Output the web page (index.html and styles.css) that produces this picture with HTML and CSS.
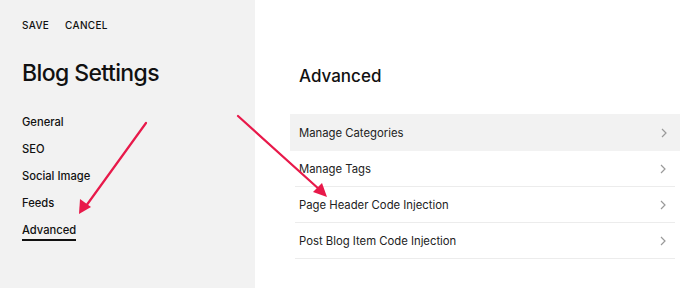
FILE: index.html
```html
<!DOCTYPE html>
<html>
<head>
<meta charset="utf-8">
<link rel="stylesheet" href="styles.css">
</head>
<body>
<div class="app">
  <aside class="sidebar">
    <div class="actions">
      <span class="action">SAVE</span>
      <span class="action">CANCEL</span>
    </div>
    <h1 class="side-title">Blog Settings</h1>
    <nav class="nav">
      <a class="nav-item">General</a>
      <a class="nav-item">SEO</a>
      <a class="nav-item">Social Image</a>
      <a class="nav-item">Feeds</a>
      <a class="nav-item active">Advanced</a>
    </nav>
  </aside>
  <main class="content">
    <h2 class="content-title">Advanced</h2>
    <ul class="list">
      <li class="row hover"><span>Manage Categories</span><svg class="chev" viewBox="0 0 8 12" width="8" height="12"><path d="M2 2 L6 6 L2 10" fill="none" stroke="#9a9a9a" stroke-width="1.2"/></svg></li>
      <li class="row"><span>Manage Tags</span><svg class="chev" viewBox="0 0 8 12" width="8" height="12"><path d="M2 2 L6 6 L2 10" fill="none" stroke="#9a9a9a" stroke-width="1.2"/></svg></li>
      <li class="row"><span>Page Header Code Injection</span><svg class="chev" viewBox="0 0 8 12" width="8" height="12"><path d="M2 2 L6 6 L2 10" fill="none" stroke="#9a9a9a" stroke-width="1.2"/></svg></li>
      <li class="row"><span>Post Blog Item Code Injection</span><svg class="chev" viewBox="0 0 8 12" width="8" height="12"><path d="M2 2 L6 6 L2 10" fill="none" stroke="#9a9a9a" stroke-width="1.2"/></svg></li>
    </ul>
  </main>
  <svg class="arrows" width="700" height="288" viewBox="0 0 700 288">
    <g stroke="#e8194a" stroke-width="2.2" stroke-linecap="round">
      <line x1="146" y1="123" x2="86" y2="206"/>
      <line x1="238" y1="116" x2="320" y2="190"/>
    </g>
    <g fill="#e8194a">
      <polygon points="79,214 80,199 91,207"/>
      <polygon points="327,197 313,192 322,183"/>
    </g>
  </svg>
</div>
</body>
</html>
```
FILE: styles.css
```css
* { box-sizing: border-box; }
html, body { margin: 0; padding: 0; }
body {
  font-family: Inter, "Noto Sans", sans-serif;
  color: #111;
  background: #fff;
}
.app {
  position: relative;
  display: flex;
  width: 700px;
  height: 288px;
  overflow: hidden;
}
.sidebar {
  width: 255px;
  flex: none;
  background: #f2f2f2;
  padding: 19px 0 0 22px;
}
.actions {
  display: flex;
  gap: 16px;
  font-size: 10px;
  font-weight: 500;
  letter-spacing: 0.3px;
  line-height: 12px;
}
.side-title {
  margin: 28px 0 0;
  font-size: 23px;
  font-weight: 500;
  letter-spacing: -0.6px;
  line-height: 28px;
}
.nav {
  display: flex;
  flex-direction: column;
  align-items: flex-start;
  margin-top: 27px;
  gap: 11px;
}
.nav-item {
  font-size: 11.2px;
  font-weight: 500;
  line-height: 16px;
  color: #111;
}
.nav-item.active {
  border-bottom: 2px solid #111;
  padding-bottom: 1px;
}
.content {
  flex: 1;
  padding: 64px 0 0 35px;
}
.content-title {
  margin: 0 0 26px 9px;
  font-size: 17px;
  font-weight: 500;
  line-height: 24px;
}
.list {
  list-style: none;
  margin: 0;
  padding: 0;
  width: 390px;
}
.row {
  display: flex;
  justify-content: space-between;
  align-items: center;
  height: 36px;
  margin: 0 5px;
  padding: 0 8px 0 4px;
  font-size: 11.3px;
  color: #222;
  border-bottom: 1px solid #ececec;
}
.row.hover {
  background: #f2f2f2;
  margin: 0;
  padding: 0 12px 0 9px;
  border-bottom: none;
  height: 37px;
}
.arrows {
  position: absolute;
  left: 0;
  top: 0;
  pointer-events: none;
}
```
